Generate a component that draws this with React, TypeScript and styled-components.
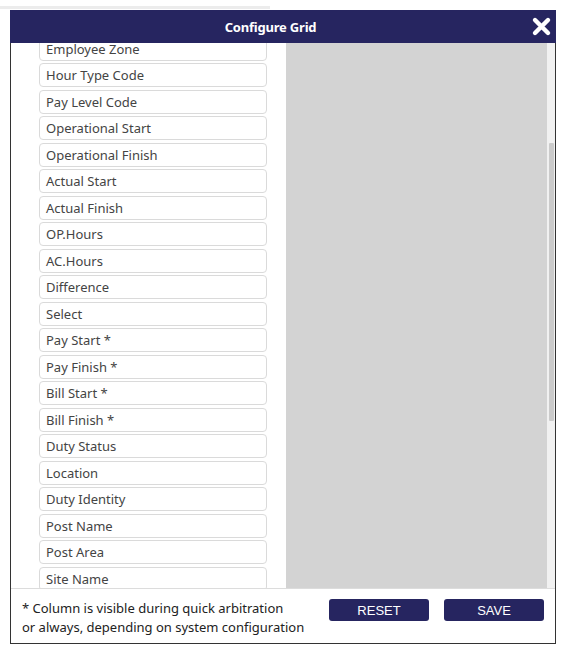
import * as React from 'react';
import styled, { createGlobalStyle } from 'styled-components';

const NAVY = '#262560';

const GlobalStyle = createGlobalStyle`
  html, body {
    margin: 0;
    padding: 0;
    background: #ffffff;
  }
  body {
    font-family: 'Noto Sans', 'Open Sans', sans-serif;
  }
`;

const StyledPage = styled.div`
  width: 566px;
  height: 655px;
  display: flex;
  flex-direction: column;
  background: #ffffff;
`;

const StyledBackdropStrip = styled.div`
  width: 270px;
  height: 3px;
  margin-top: 6px;
  margin-bottom: 1px;
  background: #ececec;
`;

const StyledDialog = styled.div`
  width: 546px;
  margin-left: 10px;
  display: flex;
  flex-direction: column;
`;

const StyledHeader = styled.div`
  height: 33px;
  display: flex;
  align-items: center;
  background: ${NAVY};
  color: #ffffff;
`;

const StyledTitle = styled.h1`
  flex: 1;
  margin: 0;
  text-align: center;
  font-size: 13px;
  font-weight: 700;
  letter-spacing: -0.2px;
`;

const StyledClose = styled.button`
  width: 25px;
  height: 33px;
  padding: 0;
  border: none;
  background: transparent;
  display: flex;
  align-items: center;
  justify-content: flex-start;
  cursor: pointer;
`;

const StyledBody = styled.div`
  display: flex;
  flex-direction: column;
  border: 1px solid #333333;
  border-top: none;
  height: 601px;
  box-sizing: border-box;
`;

const StyledScrollArea = styled.div`
  display: flex;
  height: 545px;
  border-bottom: 1px solid #dcdcdc;
`;

const StyledViewport = styled.div`
  flex: 1;
  overflow: hidden;
`;

const StyledColumns = styled.div`
  display: grid;
  grid-template-columns: 228px 1fr;
  column-gap: 19px;
  padding-left: 28px;
`;

const StyledList = styled.ul`
  list-style: none;
  margin: 0;
  padding: 4px 0 6px;
  display: flex;
  flex-direction: column;
  gap: 2.53px;
`;

const StyledItem = styled.li`
  height: 24px;
  box-sizing: border-box;
  border: 1px solid #dadada;
  border-radius: 4px;
  padding: 0 6px;
  display: flex;
  align-items: center;
  font-size: 13px;
  color: #444444;
  background: #ffffff;
`;

const StyledDropZone = styled.div`
  background: #d3d3d3;
`;

const StyledTrack = styled.div`
  width: 8px;
  background: #f1f1f1;
  position: relative;
`;

const StyledThumb = styled.div`
  position: absolute;
  left: 2px;
  width: 5px;
  background: #cbcbcb;
  border-radius: 1px;
`;

const StyledFooter = styled.div`
  flex: 1;
  display: flex;
  align-items: flex-start;
  justify-content: space-between;
  padding: 10px 11px 0 11px;
`;

const StyledNote = styled.p`
  margin: 0;
  font-size: 13px;
  line-height: 19px;
  color: #222222;
`;

const StyledButtons = styled.div`
  display: flex;
  gap: 15px;
`;

const StyledButton = styled.button`
  width: 100px;
  height: 22px;
  border: none;
  border-radius: 3px;
  background: ${NAVY};
  color: #ffffff;
  font-family: 'Liberation Sans', Arial, sans-serif;
  font-size: 13px;
  cursor: pointer;
`;

const COLUMNS = [
  'Employee Code',
  'Employee Name',
  'Customer',
  'Site Code',
  'Post Code',
  'Shift Date',
  'Employee Type',
  'Employee Zone',
  'Hour Type Code',
  'Pay Level Code',
  'Operational Start',
  'Operational Finish',
  'Actual Start',
  'Actual Finish',
  'OP.Hours',
  'AC.Hours',
  'Difference',
  'Select',
  'Pay Start *',
  'Pay Finish *',
  'Bill Start *',
  'Bill Finish *',
  'Duty Status',
  'Location',
  'Duty Identity',
  'Post Name',
  'Post Area',
  'Site Name',
  'Customer Name',
  'Contract',
  'Supervisor',
  'Break Minutes',
  'Pay Rate',
  'Bill Rate',
  'Comments',
  'Created By',
  'Modified By',
  'Approved',
  'Status',
  'Notes',
];

const CloseIcon: React.FC = () => (
  <svg width="21" height="21" viewBox="0 0 21 21">
    <path
      d="M4 4 L17 17 M17 4 L4 17"
      stroke="#ffffff"
      strokeWidth="4.4"
      strokeLinecap="round"
    />
  </svg>
);

export default function App() {
  const viewportRef = React.useRef<HTMLDivElement>(null);
  const [thumb, setThumb] = React.useState({ top: 101, height: 278 });

  React.useLayoutEffect(() => {
    const el = viewportRef.current;
    if (!el) return;
    el.scrollTop = 196;
    const ratio = el.clientHeight / el.scrollHeight;
    setThumb({
      top: (el.scrollTop / el.scrollHeight) * el.clientHeight,
      height: ratio * el.clientHeight,
    });
  }, []);

  return (
    <StyledPage>
      <GlobalStyle />
      <StyledBackdropStrip />
      <StyledDialog>
        <StyledHeader>
          <StyledTitle>Configure Grid</StyledTitle>
          <StyledClose aria-label="Close">
            <CloseIcon />
          </StyledClose>
        </StyledHeader>
        <StyledBody>
          <StyledScrollArea>
            <StyledViewport ref={viewportRef}>
              <StyledColumns>
                <StyledList>
                  {COLUMNS.map((name) => (
                    <StyledItem key={name}>{name}</StyledItem>
                  ))}
                </StyledList>
                <StyledDropZone />
              </StyledColumns>
            </StyledViewport>
            <StyledTrack>
              <StyledThumb style={{ top: thumb.top, height: thumb.height }} />
            </StyledTrack>
          </StyledScrollArea>
          <StyledFooter>
            <StyledNote>
              * Column is visible during quick arbitration
              <br />
              or always, depending on system configuration
            </StyledNote>
            <StyledButtons>
              <StyledButton>RESET</StyledButton>
              <StyledButton>SAVE</StyledButton>
            </StyledButtons>
          </StyledFooter>
        </StyledBody>
      </StyledDialog>
    </StyledPage>
  );
}
